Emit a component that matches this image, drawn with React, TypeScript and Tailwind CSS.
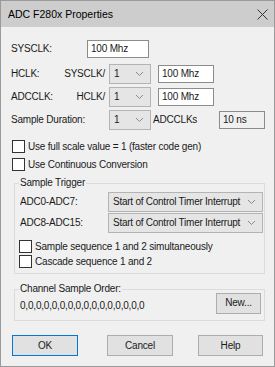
const Chevron = () => (
  <svg width="9" height="6" viewBox="0 0 9 6" className="shrink-0">
    <path d="M1 1 L4.5 4.5 L8 1" fill="none" stroke="#8a8a8a" strokeWidth="1" />
  </svg>
)

const Select = ({ value, className }: { value: string; className: string }) => (
  <div
    className={`h-[20px] flex items-center justify-between pl-[4px] pr-[6px] bg-[#e5e5e5] border border-[#b4b4b4] whitespace-nowrap ${className}`}
  >
    <span className="tracking-[-0.25px]">{value}</span>
    <Chevron />
  </div>
)

const TextBox = ({ value, className }: { value: string; className: string }) => (
  <div className={`h-[18px] flex items-center pl-[3px] border border-[#8c8c8c] whitespace-nowrap ${className}`}>{value}</div>
)

const Check = ({ label }: { label: string }) => (
  <div className="flex items-center h-[13px] whitespace-nowrap">
    <div className="w-[13px] h-[13px] bg-white border border-[#333]" />
    <span className="ml-[3px]">{label}</span>
  </div>
)

const Button = ({ label, primary }: { label: string; primary?: boolean }) => (
  <div
    className={`h-[21px] flex items-center justify-center bg-[#e1e1e1] border ${
      primary ? 'border-[#0078d7]' : 'border-[#adadad]'
    }`}
  >
    {label}
  </div>
)

export default function App() {
  return (
    <div className="w-[275px] h-[367px] bg-[#f0f0f0] border border-[#9a9a9a] flex flex-col text-[10px] tracking-[-0.2px] text-[#1a1a1a] font-['Liberation_Sans',Arial,sans-serif] leading-none overflow-hidden">
      {/* title bar */}
      <div className="h-[26px] shrink-0 bg-[#cdcdcd] flex items-center justify-between pl-[7px] pr-[6px]">
        <span className="text-[10.5px] tracking-normal text-[#000]">ADC F280x Properties</span>
        <svg width="11" height="11" viewBox="0 0 11 11">
          <path d="M0.5 0.5 L10.5 10.5 M10.5 0.5 L0.5 10.5" stroke="#333" strokeWidth="1" />
        </svg>
      </div>

      <div className="flex flex-col pl-[10px]">
        {/* SYSCLK */}
        <div className="mt-[13px] h-[17px] flex items-center">
          <span className="w-[76px]">SYSCLK:</span>
          <TextBox value="100 Mhz" className="w-[62px] h-[17px] bg-white" />
        </div>

        {/* HCLK */}
        <div className="mt-[7px] h-[20px] flex items-center">
          <span className="w-[51px]">HCLK:</span>
          <span className="w-[43px] text-right">SYSCLK/</span>
          <Select value="1" className="ml-[4px] w-[42px]" />
          <TextBox value="100 Mhz" className="ml-[7px] w-[56px] bg-white" />
        </div>

        {/* ADCCLK */}
        <div className="mt-[3px] h-[20px] flex items-center">
          <span className="w-[51px]">ADCCLK:</span>
          <span className="w-[43px] text-right">HCLK/</span>
          <Select value="1" className="ml-[4px] w-[42px]" />
          <TextBox value="100 Mhz" className="ml-[7px] w-[56px] bg-white" />
        </div>

        {/* Sample duration */}
        <div className="mt-[3px] h-[20px] flex items-center">
          <span className="w-[98px]">Sample Duration:</span>
          <Select value="1" className="w-[42px]" />
          <span className="ml-[2px] w-[66px]">ADCCLKs</span>
          <TextBox value="10 ns" className="w-[46px] bg-[#f0f0f0]" />
        </div>

        <div className="mt-[10px] ml-[1px] flex flex-col gap-[5px]">
          <Check label="Use full scale value = 1 (faster code gen)" />
          <Check label="Use Continuous Conversion" />
        </div>

        {/* Sample Trigger group */}
        <div className="relative mt-[12px] ml-[3px] w-[251px] h-[91px] border border-[#dcdcdc] flex flex-col pl-[5px]">
          <span className="absolute -top-[6px] left-[4px] px-[1px] bg-[#f0f0f0]">Sample Trigger</span>
          <div className="mt-[8px] h-[20px] flex items-center">
            <span className="w-[88px]">ADC0-ADC7:</span>
            <Select value="Start of Control Timer Interrupt" className="w-[155px]" />
          </div>
          <div className="mt-[1px] h-[20px] flex items-center">
            <span className="w-[88px]">ADC8-ADC15:</span>
            <Select value="Start of Control Timer Interrupt" className="w-[155px]" />
          </div>
          <div className="mt-[7px] -ml-[1px] flex flex-col gap-[2px]">
            <Check label="Sample sequence 1 and 2 simultaneously" />
            <Check label="Cascade sequence 1 and 2" />
          </div>
        </div>

        {/* Channel Sample Order group */}
        <div className="relative mt-[15px] ml-[3px] w-[251px] h-[32px] border border-[#dcdcdc] flex items-center justify-between pl-[5px] pr-[3px]">
          <span className="absolute -top-[6px] left-[4px] px-[1px] bg-[#f0f0f0]">Channel Sample Order:</span>
          <span className="mt-[2px]">0,0,0,0,0,0,0,0,0,0,0,0,0,0,0,0</span>
          <div className="w-[45px] -mt-[4px]">
            <Button label="New..." />
          </div>
        </div>

        {/* buttons */}
        <div className="mt-[14px] ml-[1px] flex">
          <div className="w-[66px]">
            <Button label="OK" primary />
          </div>
          <div className="ml-[29px] w-[66px]">
            <Button label="Cancel" />
          </div>
          <div className="ml-[25px] w-[65px]">
            <Button label="Help" />
          </div>
        </div>
      </div>
    </div>
  )
}
